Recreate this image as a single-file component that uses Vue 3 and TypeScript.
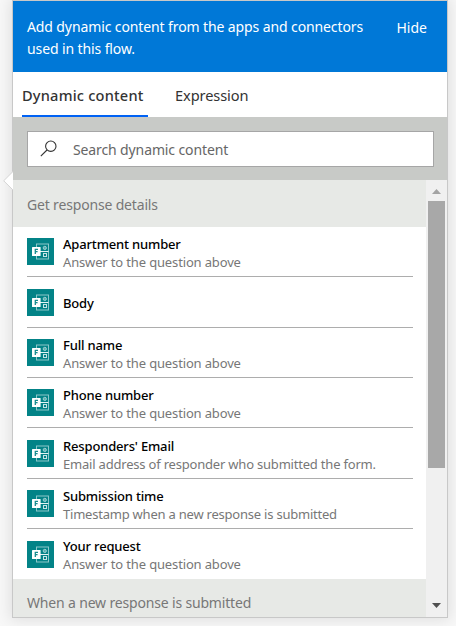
<script setup lang="ts">
import { ref } from 'vue'

interface Field {
  title: string
  description?: string
  spacing?: number
}

const activeTab = ref('dynamic')
const query = ref('')

const fields: Field[] = [
  { title: 'Apartment number', description: 'Answer to the question above', spacing: -0.15 },
  { title: 'Body' },
  { title: 'Full name', description: 'Answer to the question above', spacing: -0.15 },
  { title: 'Phone number', description: 'Answer to the question above', spacing: -0.15 },
  { title: "Responders' Email", description: 'Email address of responder who submitted the form.', spacing: -0.2 },
  { title: 'Submission time', description: 'Timestamp when a new response is submitted', spacing: -0.22 },
  { title: 'Your request', description: 'Answer to the question above', spacing: -0.15 },
]
</script>

<template>
  <div class="page">
    <section class="panel">
      <svg class="pointer" width="10" height="20" viewBox="0 0 10 20">
        <path d="M10 0.5 L0.7 9.8 L10 19" fill="#fff" stroke="#d4d4d4" />
      </svg>
      <header class="banner">
        <p class="message">Add dynamic content from the apps and connectors<br />used in this flow.</p>
        <a class="hide">Hide</a>
      </header>
      <nav class="tabs">
        <a class="tab" :class="{ active: activeTab === 'dynamic' }" @click="activeTab = 'dynamic'">Dynamic content</a>
        <a class="tab second" :class="{ active: activeTab === 'expression' }" @click="activeTab = 'expression'">Expression</a>
      </nav>
      <div class="search">
        <label class="search-box">
          <svg width="18" height="18" viewBox="0 0 18 18" fill="none" stroke="#333" stroke-width="1.1">
            <circle cx="10.8" cy="6.2" r="5.2" />
            <path d="M7 10 L0.8 16.2" />
          </svg>
          <input v-model="query" placeholder="Search dynamic content" />
        </label>
      </div>
      <div class="body">
        <div class="list">
          <h2 class="group first">Get response details</h2>
          <ul class="items">
            <li v-for="f in fields" :key="f.title" class="item">
              <svg class="icon" width="27" height="27" viewBox="0 0 27 27">
                <rect width="27" height="27" fill="#038387" />
                <rect x="9.5" y="6" width="12" height="15" fill="none" stroke="#8cc8ca" />
                <path d="M13 13.5 H21.5" stroke="#e4f3f3" />
                <circle cx="17.8" cy="9.9" r="1.6" fill="#5aafb1" stroke="#a5d5d6" stroke-width="0.9" />
                <rect x="16.5" y="15.5" width="3" height="3" fill="none" stroke="#c4e4e5" />
                <rect x="5" y="9" width="8.6" height="9" rx="0.6" fill="#fff" />
                <path d="M8.3 16 V11.4 H11 M8.3 13.7 H10.6" fill="none" stroke="#168c8f" stroke-width="1.3" />
              </svg>
              <div class="text">
                <div class="title">{{ f.title }}</div>
                <div v-if="f.description" class="description" :style="{ letterSpacing: f.spacing + 'px' }">{{ f.description }}</div>
              </div>
            </li>
          </ul>
          <h2 class="group last">When a new response is submitted</h2>
        </div>
        <div class="scrollbar">
          <svg class="up" width="9" height="5" viewBox="0 0 9 5"><path d="M0 5 L4.5 0 L9 5Z" fill="#a3a3a3" /></svg>
          <div class="thumb"></div>
          <svg class="down" width="9" height="5" viewBox="0 0 9 5"><path d="M0 0 L4.5 5 L9 0Z" fill="#505050" /></svg>
        </div>
      </div>
    </section>
  </div>
</template>

<style>
body {
  background: #f8f8f8;
}
</style>

<style scoped>
.page {
  box-sizing: border-box;
  height: 626px;
  padding-left: 12px;
  overflow: hidden;
  background: #f8f8f8;
  font-family: "Noto Sans", "Open Sans", sans-serif;
}
.panel {
  position: relative;
  box-sizing: border-box;
  display: flex;
  flex-direction: column;
  width: 436px;
  height: 618px;
  border: 1px solid #c8c8c8;
  background: #fff;
  box-shadow: 0 0 14px 2px rgba(0, 0, 0, 0.1);
}
.pointer {
  position: absolute;
  left: -10px;
  top: 170px;
}
.banner {
  box-sizing: border-box;
  display: flex;
  justify-content: space-between;
  height: 71px;
  padding: 15px 20px 0 14px;
  background: #0078d7;
  color: #fff;
  font-size: 14px;
  line-height: 22px;
}
.message {
  margin: 0;
  letter-spacing: -0.11px;
  white-space: nowrap;
}
.hide {
  padding-top: 1px;
}
.tabs {
  display: flex;
  height: 45px;
  padding-left: 9px;
  color: #333;
  font-size: 14.6px;
}
.tab {
  box-sizing: border-box;
  width: 126px;
  line-height: 46px;
  height: 45px;
  white-space: nowrap;
}
.tab.second {
  margin-left: 27px;
  letter-spacing: -0.1px;
}
.tab.active {
  border-bottom: 2px solid #0062f4;
  font-weight: 500;
  letter-spacing: 0.2px;
}
.search {
  height: 35px;
  padding: 14px 13px 14px 14px;
  background: #c8cac7;
}
.search-box {
  box-sizing: border-box;
  display: flex;
  height: 36px;
  padding: 8px 0 0 12px;
  border: 1px solid #a6a6a6;
  background: #fff;
}
.search-box input {
  flex: 1;
  height: 20px;
  margin-left: 15px;
  padding: 0;
  border: 0;
  outline: 0;
  background: transparent;
  color: #333;
  font: 14px/20px "Noto Sans", sans-serif;
  letter-spacing: -0.12px;
}
.search-box input::placeholder {
  color: #666;
  opacity: 1;
}
.body {
  display: flex;
  flex: 1;
  min-height: 0;
}
.list {
  width: 413px;
  overflow: hidden;
}
.group {
  margin: 0;
  padding-left: 14px;
  background: #e7e9e6;
  color: #777;
  font-size: 14px;
  font-weight: 400;
  letter-spacing: -0.17px;
  line-height: 49px;
  white-space: nowrap;
}
.group.first {
  height: 46.9px;
}
.group.last {
  height: 40px;
  line-height: 47px;
}
.items {
  margin: 0;
  padding: 0 13px 0 14px;
  list-style: none;
}
.item {
  box-sizing: border-box;
  display: flex;
  height: 50.4px;
  border-bottom: 1px solid #adadad;
}
.item:last-child {
  height: 49.7px;
  border-bottom: 0;
}
.icon {
  flex: none;
  margin-top: 11.4px;
}
.text {
  display: flex;
  flex-direction: column;
  justify-content: center;
  height: 52.4px;
  margin-left: 9px;
  font-size: 13px;
  line-height: 18px;
  white-space: nowrap;
}
.title {
  color: #000;
  font-weight: 500;
  letter-spacing: -0.17px;
}
.description {
  color: #777;
}
.scrollbar {
  display: flex;
  flex-direction: column;
  align-items: center;
  width: 21px;
  background: #f0f0f0;
}
.up {
  margin-top: 9px;
}
.thumb {
  width: 17px;
  height: 267px;
  margin-top: 7px;
  background: #a8a8a8;
}
.down {
  margin-top: auto;
  margin-bottom: 9px;
}
</style>
